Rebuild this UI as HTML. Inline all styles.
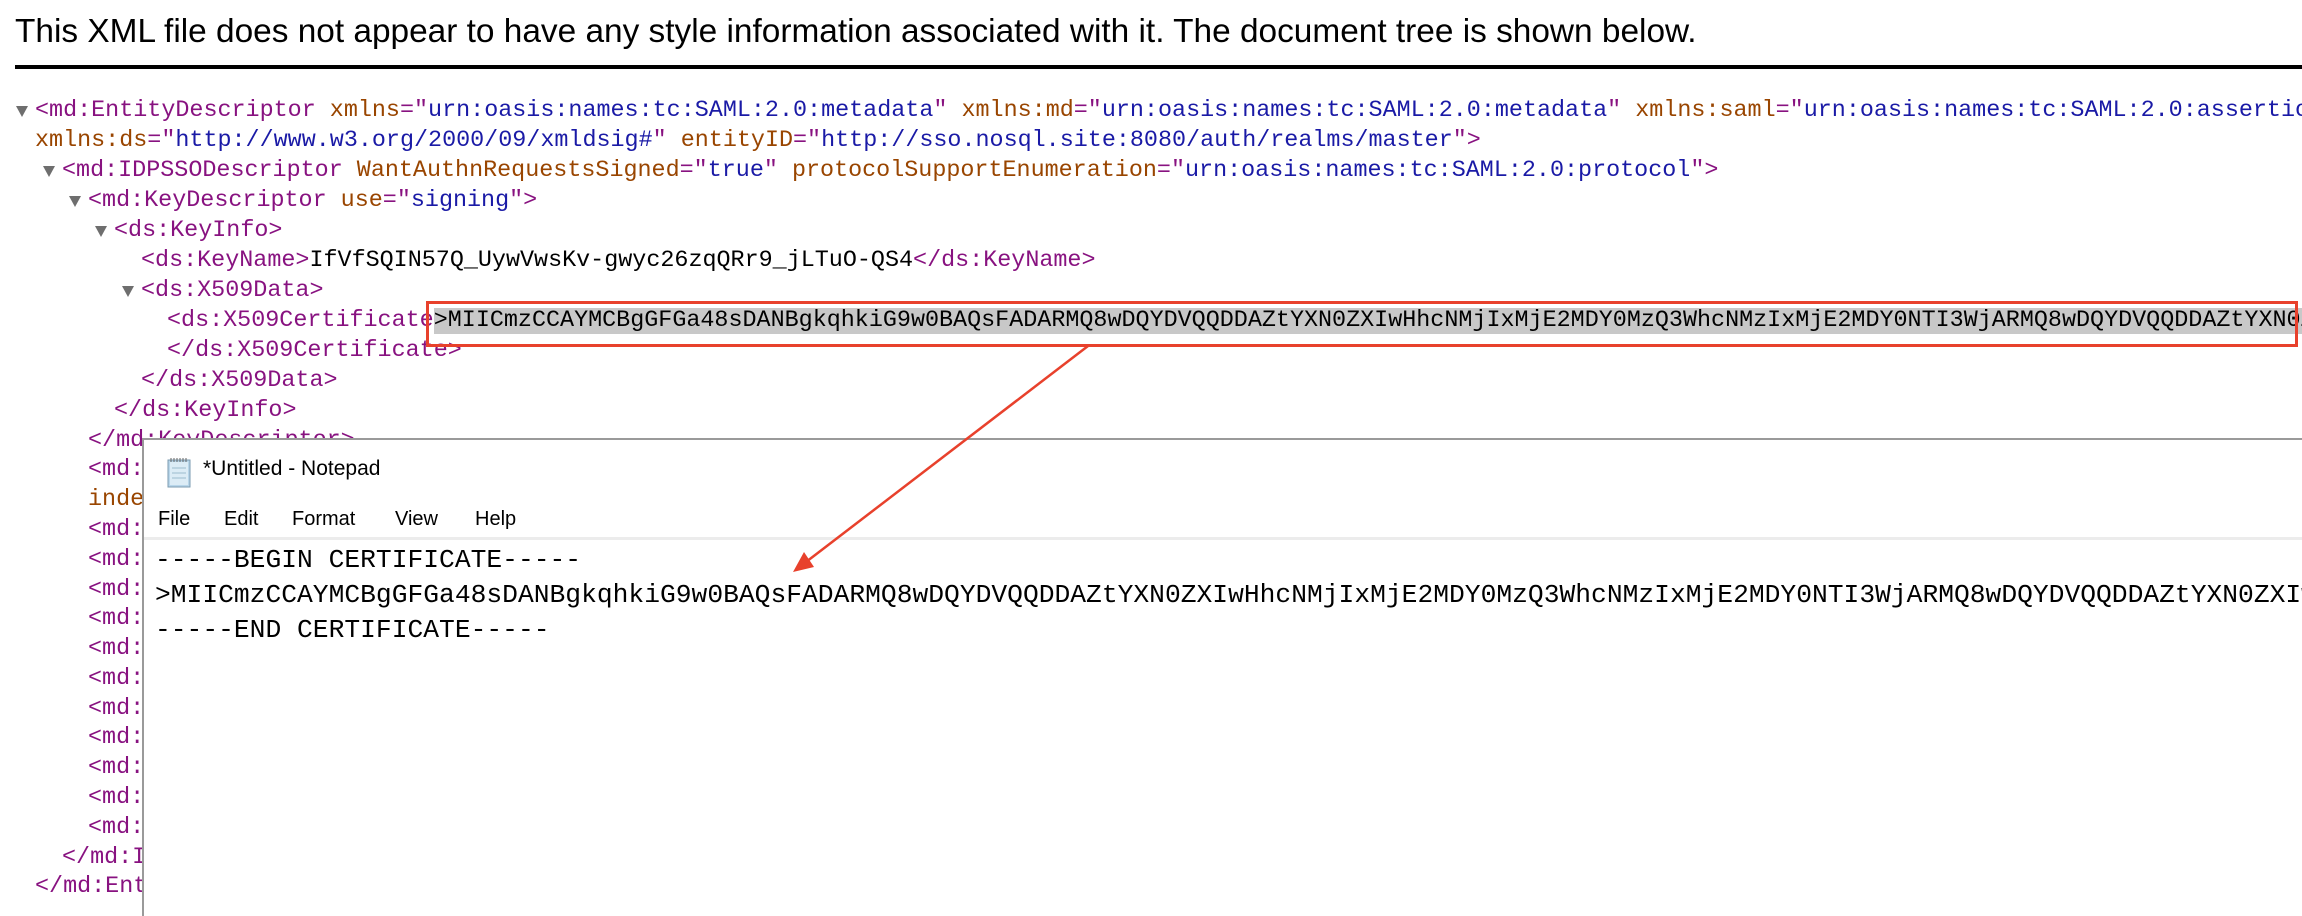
<!DOCTYPE html>
<html><head><meta charset="utf-8"><style>
html,body{margin:0;padding:0;background:#fff;width:2302px;height:916px;overflow:hidden;position:relative}
.wrap{position:absolute;left:0;top:0;width:2302px;height:916px;overflow:hidden}
.h{position:absolute;left:15px;top:13px;font-family:"Liberation Sans",sans-serif;font-size:33.4px;color:#000;white-space:nowrap}
.rule{position:absolute;left:15px;top:65px;width:2287px;height:4px;background:#000}
.l{position:absolute;font-family:"Liberation Mono",monospace;font-size:23.4px;line-height:30px;height:30px;white-space:nowrap;color:#000}
.t{color:#881280}.a{color:#994500}.v{color:#1a1aa6}
.tri{position:absolute;width:0;height:0;border-left:6px solid transparent;border-right:6px solid transparent;border-top:11px solid #6e6e6e}
.hl{background:#c8c8c8}
.np{position:absolute;left:142px;top:438px;width:2160px;height:478px;background:#fff;border-top:2px solid #9a9a9a;border-left:2px solid #9a9a9a;overflow:hidden}
.ti{position:absolute;left:59px;top:17px;font-family:"Liberation Sans",sans-serif;font-size:21px;color:#000}
.mn{position:absolute;top:68px;font-family:"Liberation Sans",sans-serif;font-size:20px;color:#000}
.sep{position:absolute;left:0;top:97px;width:100%;height:3px;background:#ececec}
.nt{position:absolute;left:11px;font-family:"Liberation Mono",monospace;font-size:26.3px;line-height:35px;white-space:nowrap;color:#000}
</style></head><body><div class="wrap">
<div class="h">This XML file does not appear to have any style information associated with it. The document tree is shown below.</div>
<div class="rule"></div>

<div class="tri" style="left:16px;top:106px"></div>
<div class="l" style="left:35px;top:96px"><span class="t">&lt;md:EntityDescriptor</span> <span class="a">xmlns</span><span class="t">="</span><span class="v">urn:oasis:names:tc:SAML:2.0:metadata</span><span class="t">"</span> <span class="a">xmlns:md</span><span class="t">="</span><span class="v">urn:oasis:names:tc:SAML:2.0:metadata</span><span class="t">"</span> <span class="a">xmlns:saml</span><span class="t">="</span><span class="v">urn:oasis:names:tc:SAML:2.0:assertion</span><span class="t">"</span></div>
<div class="l" style="left:35px;top:126px"><span class="a">xmlns:ds</span><span class="t">="</span><span class="v">http://www.w3.org/2000/09/xmldsig#</span><span class="t">"</span> <span class="a">entityID</span><span class="t">="</span><span class="v">http://sso.nosql.site:8080/auth/realms/master</span><span class="t">"&gt;</span></div>
<div class="tri" style="left:43px;top:166px"></div>
<div class="l" style="left:62px;top:156px"><span class="t">&lt;md:IDPSSODescriptor</span> <span class="a">WantAuthnRequestsSigned</span><span class="t">="</span><span class="v">true</span><span class="t">"</span> <span class="a">protocolSupportEnumeration</span><span class="t">="</span><span class="v">urn:oasis:names:tc:SAML:2.0:protocol</span><span class="t">"&gt;</span></div>
<div class="tri" style="left:69px;top:196px"></div>
<div class="l" style="left:88px;top:186px"><span class="t">&lt;md:KeyDescriptor</span> <span class="a">use</span><span class="t">="</span><span class="v">signing</span><span class="t">"&gt;</span></div>
<div class="tri" style="left:95px;top:226px"></div>
<div class="l" style="left:114px;top:216px"><span class="t">&lt;ds:KeyInfo&gt;</span></div>
<div class="l" style="left:141px;top:246px"><span class="t">&lt;ds:KeyName&gt;</span>IfVfSQIN57Q_UywVwsKv-gwyc26zqQRr9_jLTuO-QS4<span class="t">&lt;/ds:KeyName&gt;</span></div>
<div class="tri" style="left:122px;top:286px"></div>
<div class="l" style="left:141px;top:276px"><span class="t">&lt;ds:X509Data&gt;</span></div>
<div class="l" style="left:167px;top:306px"><span class="t">&lt;ds:X509Certificate</span><span class="hl">&gt;MIICmzCCAYMCBgGFGa48sDANBgkqhkiG9w0BAQsFADARMQ8wDQYDVQQDDAZtYXN0ZXIwHhcNMjIxMjE2MDY0MzQ3WhcNMzIxMjE2MDY0NTI3WjARMQ8wDQYDVQQDDAZtYXN0ZXIwggEiMA0GCSqGSIb3</span></div>
<div class="l" style="left:167px;top:336px"><span class="t">&lt;/ds:X509Certificate&gt;</span></div>
<div class="l" style="left:141px;top:366px"><span class="t">&lt;/ds:X509Data&gt;</span></div>
<div class="l" style="left:114px;top:396px"><span class="t">&lt;/ds:KeyInfo&gt;</span></div>
<div class="l" style="left:88px;top:426px"><span class="t">&lt;/md:KeyDescriptor&gt;</span></div>
<div class="l" style="left:88px;top:455px"><span class="t">&lt;md:ArtifactResolutionService</span></div>
<div class="l" style="left:88px;top:485px"><span class="a">index</span></div>
<div class="l" style="left:88px;top:515px"><span class="t">&lt;md:SingleLogoutService</span></div>
<div class="l" style="left:88px;top:545px"><span class="t">&lt;md:SingleLogoutService</span></div>
<div class="l" style="left:88px;top:575px"><span class="t">&lt;md:SingleLogoutService</span></div>
<div class="l" style="left:88px;top:604px"><span class="t">&lt;md:SingleLogoutService</span></div>
<div class="l" style="left:88px;top:634px"><span class="t">&lt;md:NameIDFormat</span></div>
<div class="l" style="left:88px;top:664px"><span class="t">&lt;md:NameIDFormat</span></div>
<div class="l" style="left:88px;top:694px"><span class="t">&lt;md:NameIDFormat</span></div>
<div class="l" style="left:88px;top:723px"><span class="t">&lt;md:NameIDFormat</span></div>
<div class="l" style="left:88px;top:753px"><span class="t">&lt;md:SingleSignOnService</span></div>
<div class="l" style="left:88px;top:783px"><span class="t">&lt;md:SingleSignOnService</span></div>
<div class="l" style="left:88px;top:813px"><span class="t">&lt;md:SingleSignOnService</span></div>
<div class="l" style="left:62px;top:843px"><span class="t">&lt;/md:IDPSSODescriptor&gt;</span></div>
<div class="l" style="left:35px;top:872px"><span class="t">&lt;/md:EntityDescriptor&gt;</span></div>

<div style="position:absolute;left:426px;top:301px;width:1866px;height:40px;border:3px solid #e8412c"></div>

<div class="np">
  <svg style="position:absolute;left:20px;top:16px" width="32" height="32" viewBox="0 0 32 32">
    <rect x="4" y="4" width="22" height="27" fill="#b8d6ea" stroke="#7b9bb0"/>
    <rect x="6" y="6" width="18" height="23" fill="#dcecf6"/>
    <line x1="8" y1="12" x2="22" y2="12" stroke="#9dbccf"/><line x1="8" y1="17" x2="22" y2="17" stroke="#9dbccf"/><line x1="8" y1="22" x2="22" y2="22" stroke="#9dbccf"/>
    <path d="M7 2v4M10 2v4M13 2v4M16 2v4M19 2v4M22 2v4" stroke="#666" stroke-width="1"/>
  </svg>
  <div class="ti">*Untitled - Notepad</div>
  <div class="mn" style="left:14px">File</div>
  <div class="mn" style="left:80px">Edit</div>
  <div class="mn" style="left:148px">Format</div>
  <div class="mn" style="left:251px">View</div>
  <div class="mn" style="left:331px">Help</div>
  <div class="sep"></div>
  <div class="nt" style="top:103px">-----BEGIN CERTIFICATE-----</div>
  <div class="nt" style="top:138px">&gt;MIICmzCCAYMCBgGFGa48sDANBgkqhkiG9w0BAQsFADARMQ8wDQYDVQQDDAZtYXN0ZXIwHhcNMjIxMjE2MDY0MzQ3WhcNMzIxMjE2MDY0NTI3WjARMQ8wDQYDVQQDDAZtYXN0ZXIwggEiMA0G</div>
  <div class="nt" style="top:173px">-----END CERTIFICATE-----</div>
</div>

<svg style="position:absolute;left:0;top:0" width="2302" height="916">
  <line x1="1088" y1="346" x2="806" y2="562" stroke="#e8412c" stroke-width="2.5"/>
  <polygon points="793,572 814,567 804,552" fill="#e8412c"/>
</svg>
</div></body></html>
